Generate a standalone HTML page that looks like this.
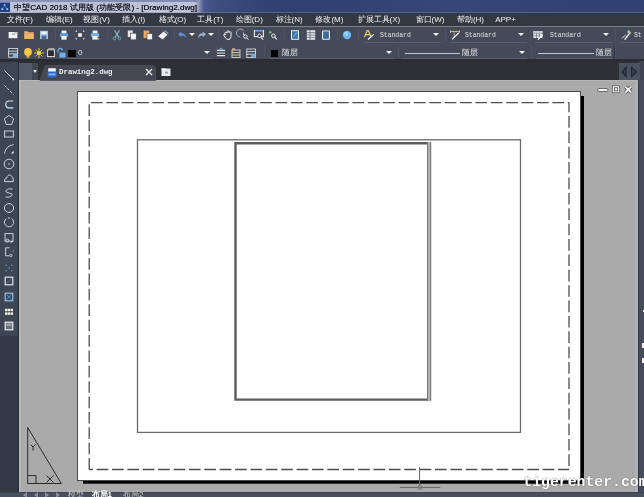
<!DOCTYPE html>
<html><head><meta charset="utf-8">
<style>
*{margin:0;padding:0;box-sizing:border-box}
html,body{width:644px;height:497px;overflow:hidden;background:#2f343b;font-family:"Liberation Sans",sans-serif}
.a{position:absolute}
svg{position:absolute;overflow:visible}
#root{position:absolute;left:0;top:0;width:644px;height:497px;overflow:hidden;filter:blur(0.3px)}
#title{left:0;top:0;width:644px;height:13px;background:linear-gradient(90deg,#bcc0d4 0,#bec2d6 194px,#9aa0c4 198px,#4a5690 204px,#3e5080 215px,#334474 260px,#304070 300px,#364676 450px,#334474 540px,#314272 644px)}
#ttop{left:0;top:0;width:198px;height:1.5px;background:linear-gradient(90deg,#8a92b8,#7e88b0)}
#tband{left:0;top:11.5px;width:644px;height:1.5px;background:linear-gradient(180deg,rgba(150,158,190,.45),rgba(120,128,160,.3))}
#ttxt{left:14px;top:1.6px;height:12px;line-height:12px;font-size:8.1px;color:#1a1c2a;text-shadow:0 0 0.4px #1a1c2a;white-space:nowrap}
#menu{left:0;top:13px;width:644px;height:13px;background:#333942}
.mi{position:absolute;top:13.4px;height:13px;line-height:13px;font-size:8px;color:#f0f0f0;white-space:nowrap}
#sep1{left:0;top:26px;width:644px;height:1.4px;background:#7a8089}
#tb{left:0;top:27px;width:644px;height:32px;background:#444a58}
#tbb{left:0;top:59.3px;width:644px;height:2.7px;background:#2a2d33}
#tabrow{left:19px;top:62px;width:625px;height:18px;background:#2e3036}
#pal{left:0;top:62px;width:18px;height:274px;background:#3e4553}
#lft{left:0;top:336px;width:19px;height:156px;background:#343a45}
#palr{left:18px;top:62px;width:1px;height:430px;background:#2a2e34}
#gray{left:19px;top:80px;width:619.2px;height:412px;background:#aaaaaa;border-left:2px solid #b6b6b6;border-right:3px solid #b0b2b8;border-top:1.5px solid #b6b6b6}
#rstrip{left:638.2px;top:62px;width:5.8px;height:430px;background:#464c5a;border-left:1.8px solid #343846}
#bot{left:0;top:492px;width:644px;height:5px;background:#47505e;border-top:1.2px solid #3e4450}
.std{position:absolute;font-family:"Liberation Mono",monospace;font-size:8px;color:#e4e4e4;height:10px;line-height:10px;white-space:nowrap;transform-origin:0 50%}
.sep{position:absolute;width:1.4px;background:#30343e;border-right:0.8px solid #4e5462}
.tri{position:absolute;width:0;height:0;border-left:3px solid transparent;border-right:3px solid transparent;border-top:3.3px solid #f0f0f0}
.cl{position:absolute;height:1px;background:#585e6c}
.c{display:inline-block;text-align:center;overflow:hidden;vertical-align:top}
.zh{position:absolute;font-size:8px;color:#e8e8e8;height:10px;line-height:10px;white-space:nowrap}
</style></head><body><div id="root">
<div id="title" class="a"></div>
<div id="ttop" class="a"></div>
<div id="tband" class="a"></div>
<div id="menu" class="a"></div>
<div id="sep1" class="a"></div>
<div id="tb" class="a"></div>
<div id="tbb" class="a"></div>
<div id="tabrow" class="a"></div>
<div id="pal" class="a"></div>
<div id="lft" class="a"></div>
<div id="palr" class="a"></div>
<div id="gray" class="a"></div>
<div id="rstrip" class="a"></div>
<div id="bot" class="a"></div>
<svg width="12" height="12" style="left:0;top:1.5px"><rect x="0" y="0.5" width="10" height="9.5" fill="#1d3f82"/><g fill="#8ec0f0"><circle cx="4.6" cy="3" r="1"/><circle cx="2.4" cy="7.2" r="1.1"/><circle cx="7.2" cy="7.2" r="1.1"/></g><path d="M4.6 3L2.4 7.2M4.6 3L7.2 7.2" stroke="#6aa0d8" stroke-width="0.6"/></svg>
<div id="ttxt" class="a"><span class="c" style="width:8.1px">中</span><span class="c" style="width:8.1px">望</span>CAD 2018 <span class="c" style="width:8.1px">试</span><span class="c" style="width:8.1px">用</span><span class="c" style="width:8.1px">版</span> (<span class="c" style="width:8.1px">功</span><span class="c" style="width:8.1px">能</span><span class="c" style="width:8.1px">受</span><span class="c" style="width:8.1px">限</span>) - [Drawing2.dwg]</div>
<div class="mi" style="left:6.7px"><span class="c" style="width:8px">文</span><span class="c" style="width:8px">件</span>(F)</div>
<div class="mi" style="left:46px"><span class="c" style="width:8px">编</span><span class="c" style="width:8px">辑</span>(E)</div>
<div class="mi" style="left:83.2px"><span class="c" style="width:8px">视</span><span class="c" style="width:8px">图</span>(V)</div>
<div class="mi" style="left:121.7px"><span class="c" style="width:8px">插</span><span class="c" style="width:8px">入</span>(I)</div>
<div class="mi" style="left:158.7px"><span class="c" style="width:8px">格</span><span class="c" style="width:8px">式</span>(O)</div>
<div class="mi" style="left:197.2px"><span class="c" style="width:8px">工</span><span class="c" style="width:8px">具</span>(T)</div>
<div class="mi" style="left:235.7px"><span class="c" style="width:8px">绘</span><span class="c" style="width:8px">图</span>(D)</div>
<div class="mi" style="left:275.5px"><span class="c" style="width:8px">标</span><span class="c" style="width:8px">注</span>(N)</div>
<div class="mi" style="left:315.4px"><span class="c" style="width:8px">修</span><span class="c" style="width:8px">改</span>(M)</div>
<div class="mi" style="left:357.6px"><span class="c" style="width:8px">扩</span><span class="c" style="width:8px">展</span><span class="c" style="width:8px">工</span><span class="c" style="width:8px">具</span>(X)</div>
<div class="mi" style="left:415.5px"><span class="c" style="width:8px">窗</span><span class="c" style="width:8px">口</span>(W)</div>
<div class="mi" style="left:456.9px"><span class="c" style="width:8px">帮</span><span class="c" style="width:8px">助</span>(H)</div>
<div class="mi" style="left:495.2px">APP+</div>
<div class="a" style="left:2.5px;top:28px;width:1px;height:31px;background:#454b56"></div>
<div class="a" style="left:5.5px;top:28px;width:1px;height:31px;background:#454b56"></div>
<div class="cl" style="left:364px;top:41.6px;width:77px"></div>
<div class="cl" style="left:450px;top:41.6px;width:77px"></div>
<div class="cl" style="left:535px;top:41.6px;width:77px"></div>
<div class="cl" style="left:620px;top:41.6px;width:24px"></div>
<div class="cl" style="left:66px;top:58.2px;width:147px"></div>
<div class="cl" style="left:270px;top:58.2px;width:124px"></div>
<div class="cl" style="left:402px;top:58.2px;width:125px"></div>
<div class="cl" style="left:536px;top:58.2px;width:76px"></div>
<div class="sep" style="left:54.5px;top:29px;height:12px"></div>
<div class="sep" style="left:107.0px;top:29px;height:12px"></div>
<div class="sep" style="left:174.0px;top:29px;height:12px"></div>
<div class="sep" style="left:217.5px;top:29px;height:12px"></div>
<div class="sep" style="left:284.0px;top:29px;height:12px"></div>
<div class="sep" style="left:337.0px;top:29px;height:12px"></div>
<div class="sep" style="left:357.5px;top:29px;height:12px"></div>
<div class="sep" style="left:445.0px;top:29px;height:12px"></div>
<div class="sep" style="left:530.0px;top:29px;height:12px"></div>
<div class="sep" style="left:614.5px;top:29px;height:12px"></div>
<div class="sep" style="left:215.5px;top:46px;height:12px"></div>
<div class="sep" style="left:263.5px;top:46px;height:12px"></div>
<div class="sep" style="left:397.5px;top:46px;height:12px"></div>
<div class="sep" style="left:531.0px;top:46px;height:12px"></div>
<div class="sep" style="left:614.3px;top:46px;height:12px"></div>
<div class="tri" style="left:188.6px;top:33.3px"></div>
<div class="tri" style="left:208.4px;top:33.3px"></div>
<div class="tri" style="left:432.5px;top:33.3px"></div>
<div class="tri" style="left:518px;top:33.3px"></div>
<div class="tri" style="left:603px;top:33.3px"></div>
<div class="tri" style="left:204px;top:51.3px"></div>
<div class="tri" style="left:386px;top:51.3px"></div>
<div class="tri" style="left:519px;top:51.3px"></div>
<svg width="12" height="12" viewBox="0 0 12 12" style="left:7.3px;top:28.8px"><rect x="1.6" y="3" width="8.8" height="6.2" fill="#f2f2f2"/><rect x="5" y="4.6" width="3" height="1.2" fill="#9aa"/><rect x="7.5" y="3" width="2.9" height="2" fill="#c8c8c8"/></svg>
<svg width="12" height="12" viewBox="0 0 12 12" style="left:22.6px;top:28.8px"><path d="M1.2 2.3h3.4l1 1H10.9v6.6H1.2z" fill="#f0b36a"/><rect x="1.2" y="4.2" width="9.7" height="0.8" fill="#d89a50"/></svg>
<svg width="12" height="12" viewBox="0 0 12 12" style="left:38.1px;top:28.8px"><rect x="2" y="1.8" width="8" height="8.3" fill="#9fc4e6"/><rect x="3.3" y="2.6" width="5.4" height="2.6" fill="#e8f2fb"/><rect x="3.6" y="6.6" width="4.8" height="3.5" fill="#4a6a90"/></svg>
<svg width="12" height="12" viewBox="0 0 12 12" style="left:58.2px;top:28.8px"><rect x="3.6" y="1.6" width="4.8" height="3" fill="#f4f4f4"/><rect x="1.8" y="4" width="8.4" height="4.2" rx="1.6" fill="#5e9ede"/><rect x="3.4" y="7" width="5.2" height="3.6" fill="#fafafa"/></svg>
<svg width="12" height="12" viewBox="0 0 12 12" style="left:74.2px;top:28.8px"><path d="M2 3v-1h1M9 2h1v1M10 9v1h-1M3 10h-1v-1" stroke="#dcdcdc" stroke-width="1" fill="none"/><rect x="4.2" y="4.2" width="3.6" height="3.6" fill="#f4f4f4"/></svg>
<svg width="12" height="12" viewBox="0 0 12 12" style="left:89.4px;top:28.8px"><rect x="3.6" y="1.6" width="4.8" height="3" fill="#f4f4f4"/><rect x="1.8" y="4" width="8.4" height="4.2" rx="1.6" fill="#7ab0e4"/><rect x="3.4" y="7" width="5.2" height="3.6" fill="#fafafa"/><rect x="8.4" y="9.2" width="1.8" height="1.4" fill="#bbb"/></svg>
<svg width="12" height="12" viewBox="0 0 12 12" style="left:110.8px;top:28.8px"><path d="M3.5 1.2L8 8.5M8.5 1.2L4 8.5" stroke="#8cc0d0" stroke-width="1.1" fill="none"/><circle cx="3.5" cy="9.4" r="1.4" fill="none" stroke="#6aa8b8" stroke-width="0.9"/><circle cx="8.5" cy="9.4" r="1.4" fill="none" stroke="#6aa8b8" stroke-width="0.9"/></svg>
<svg width="12" height="12" viewBox="0 0 12 12" style="left:126.2px;top:28.8px"><rect x="1.8" y="1.5" width="5" height="6.5" fill="#e8e8e8"/><rect x="4.6" y="4.2" width="5.6" height="6.6" fill="#fafafa" stroke="#3a3f48" stroke-width="0.6"/></svg>
<svg width="12" height="12" viewBox="0 0 12 12" style="left:141.6px;top:28.8px"><rect x="1.6" y="1.6" width="5.6" height="7.5" fill="#f0a860"/><rect x="5" y="4.6" width="5.4" height="6.2" fill="#f6f6f6" stroke="#3a3f48" stroke-width="0.6"/></svg>
<svg width="12" height="12" viewBox="0 0 12 12" style="left:157.2px;top:28.8px"><path d="M1.2 7.2L6.5 2.6L10.4 5.8L5.6 10.6z" fill="#f4f4f4"/><path d="M7.6 1.5l3.6 3.2" stroke="#7aa0c8" stroke-width="1.4"/></svg>
<svg width="12" height="12" viewBox="0 0 12 12" style="left:176.3px;top:28.8px"><path d="M2 5.2L5.2 2.4V4.2C8.2 4.2 10 5.8 10 9.6C9 7.4 7.6 6.6 5.2 6.6V8.2z" fill="#5b8fd8"/></svg>
<svg width="12" height="12" viewBox="0 0 12 12" style="left:195.6px;top:28.8px"><path d="M10 5.2L6.8 2.4V4.2C3.8 4.2 2 5.8 2 9.6C3 7.4 4.4 6.6 6.8 6.6V8.2z" fill="#9ab0cc"/></svg>
<svg width="12" height="12" viewBox="0 0 12 12" style="left:221.8px;top:28.8px"><path d="M3 6.2V4.2q0-1 1-1t1 1V2.8q0-1 1-1t1 1v.8q0-.9 1-.9t1 1V7.6q0 3-3 3H6.2q-1.6 0-2.6-1.6L1.8 6.4q-.4-.9.4-1.2t1 .8z" fill="none" stroke="#f0f0f0" stroke-width="1"/></svg>
<svg width="12" height="12" viewBox="0 0 12 12" style="left:237.6px;top:28.8px"><path d="M5.6 1.6A4 4 0 1 0 2.2 8" fill="none" stroke="#a8b8c8" stroke-width="0.9"/><path d="M5.5 3.5V6H7" stroke="#d0d8e0" stroke-width="0.8" fill="none"/><circle cx="7.4" cy="7.6" r="1.7" fill="none" stroke="#f0f0f0" stroke-width="0.9"/><path d="M8.6 8.8l1.8 1.8" stroke="#f0f0f0" stroke-width="1"/></svg>
<svg width="12" height="12" viewBox="0 0 12 12" style="left:252.9px;top:28.8px"><rect x="1.4" y="1.6" width="9" height="6" fill="none" stroke="#f0f0f0" stroke-width="1.1"/><rect x="2" y="1.1" width="8" height="1.3" fill="#5aa0e0"/><circle cx="6.5" cy="6.8" r="1.8" fill="#3a3f48" stroke="#f0f0f0" stroke-width="0.9"/><path d="M7.8 8.2l2.4 2.4" stroke="#f0f0f0" stroke-width="1.1"/></svg>
<svg width="12" height="12" viewBox="0 0 12 12" style="left:267.4px;top:28.8px"><circle cx="3.4" cy="3.2" r="1.2" fill="#7ac060"/><circle cx="6.4" cy="6.8" r="1.8" fill="none" stroke="#f0f0f0" stroke-width="1"/><path d="M7.7 8.2l2.2 2.2" stroke="#f0f0f0" stroke-width="1.1"/></svg>
<svg width="12" height="12" viewBox="0 0 12 12" style="left:288.8px;top:28.8px"><rect x="2" y="1.2" width="8" height="9.6" fill="#e8eef4"/><rect x="3" y="2.2" width="6" height="7.6" fill="#3f78a8"/><path d="M4 8L8 3.6" stroke="#a8d0f0" stroke-width="0.8"/></svg>
<svg width="12" height="12" viewBox="0 0 12 12" style="left:304.7px;top:28.8px"><rect x="1.8" y="1.2" width="8.4" height="9.6" fill="#e0e4e8"/><path d="M1.8 3.6h8.4M1.8 6h8.4M1.8 8.4h8.4M5 1.2v9.6" stroke="#5a6470" stroke-width="0.7"/></svg>
<svg width="12" height="12" viewBox="0 0 12 12" style="left:319.6px;top:28.8px"><rect x="2" y="1.4" width="8" height="9.4" rx="1" fill="#e8eef4"/><rect x="3.1" y="2.4" width="5.8" height="7.4" fill="#3a6a98"/></svg>
<svg width="12" height="12" viewBox="0 0 12 12" style="left:341.1px;top:28.8px"><circle cx="6" cy="6" r="4.2" fill="#6cb8ec"/><circle cx="5" cy="4.8" r="2" fill="#9ad2f6"/></svg>
<svg width="12" height="12" viewBox="0 0 12 12" style="left:363.2px;top:28.8px"><path d="M1.4 8.2L4.2 1.6h1.2L7.8 7.4M2.6 5.6h4" stroke="#e8d070" stroke-width="1.2" fill="none"/><path d="M5 10.6L10.8 5.2" stroke="#f0f0f0" stroke-width="1.3"/></svg>
<svg width="12" height="12" viewBox="0 0 12 12" style="left:449.3px;top:28.8px"><path d="M1.2 2.6h9.6M1.6 1.4v2.6M10.4 1.4v2.6" stroke="#e8c870" stroke-width="0.9" fill="none"/><path d="M3 10.4L9.6 4" stroke="#f0f0f0" stroke-width="1.3"/><path d="M5.2 3.4v4" stroke="#c8d8a0" stroke-width="0.8"/></svg>
<svg width="12" height="12" viewBox="0 0 12 12" style="left:532.2px;top:28.8px"><rect x="1.4" y="2" width="9" height="7" fill="#f0f0f0"/><path d="M1.4 4.4h9M1.4 6.8h9M4.4 2v7M7.4 2v7" stroke="#606a78" stroke-width="0.7"/><rect x="1.4" y="2" width="9" height="2.3" fill="#c0c8d0"/><path d="M6 10.6L10.6 6" stroke="#f8f8f8" stroke-width="1.2"/></svg>
<svg width="12" height="12" viewBox="0 0 12 12" style="left:619.8px;top:28.8px"><path d="M2 9.4L5.6 5.8" stroke="#e0e0e0" stroke-width="1"/><path d="M4.6 10.6L10.4 3.2" stroke="#f4f4f4" stroke-width="1.4"/><circle cx="8.8" cy="2.8" r="1.5" fill="#a0c880"/></svg>
<svg width="12" height="12" viewBox="0 0 12 12" style="left:7.3px;top:46.8px"><rect x="1.6" y="1.6" width="9" height="8.6" fill="none" stroke="#d8dce0" stroke-width="0.9"/><path d="M1.6 4.2h9M1.6 6.8h9" stroke="#d8dce0" stroke-width="0.9"/><rect x="6" y="6.8" width="4.6" height="3.4" fill="#80b4e0"/></svg>
<svg width="12" height="12" viewBox="0 0 12 12" style="left:22.2px;top:46.8px"><circle cx="6" cy="5" r="3.9" fill="#f2c84a"/><rect x="4.6" y="8.6" width="2.8" height="2.2" fill="#e0b040"/></svg>
<svg width="12" height="12" viewBox="0 0 12 12" style="left:33.2px;top:46.8px"><circle cx="6" cy="6" r="2.4" fill="#f0d040"/><g stroke="#e8c838" stroke-width="1"><path d="M6 1v2M6 9v2M1 6h2M9 6h2M2.6 2.6l1.3 1.3M8.1 8.1l1.3 1.3M2.6 9.4l1.3-1.3M8.1 3.9l1.3-1.3"/></g></svg>
<svg width="12" height="12" viewBox="0 0 12 12" style="left:45.0px;top:46.8px"><rect x="2.6" y="2.8" width="6.8" height="6.8" fill="#2a2a2a" stroke="#e4e4e4" stroke-width="1"/><path d="M2.6 2.8l1.4-1.2h5.4" stroke="#c8c8c8" stroke-width="0.8" fill="none"/></svg>
<svg width="12" height="12" viewBox="0 0 12 12" style="left:55.2px;top:46.8px"><path d="M3 5.6V3.6a2.2 2.2 0 0 1 4.4 0" fill="none" stroke="#70b0e8" stroke-width="1.2"/><rect x="4.4" y="5.6" width="6.2" height="5" fill="#70b0e8"/></svg>
<svg width="12" height="12" viewBox="0 0 12 12" style="left:214.9px;top:46.8px"><path d="M2 3.4h8M2 6h8M2 8.6h8" stroke="#e0e4e8" stroke-width="1.1"/><path d="M6 0.6L4 2.6h4z" fill="#70b0e8"/></svg>
<svg width="12" height="12" viewBox="0 0 12 12" style="left:230.1px;top:46.8px"><rect x="2" y="3" width="8" height="7.4" fill="none" stroke="#e0d8c0" stroke-width="0.9"/><path d="M2 5.6h8M2 8h8" stroke="#e0d8c0" stroke-width="0.9"/><rect x="2" y="1.4" width="3" height="1.6" fill="#e8c060"/></svg>
<svg width="12" height="12" viewBox="0 0 12 12" style="left:245.4px;top:46.8px"><rect x="1.8" y="2" width="8.6" height="8.4" fill="none" stroke="#d8dce0" stroke-width="0.9"/><path d="M1.8 4.6h8.6M1.8 7.2h8.6" stroke="#d8dce0" stroke-width="0.9"/><rect x="6.2" y="7.2" width="4.2" height="3.2" fill="#78a8d8"/></svg>
<svg width="12" height="12" viewBox="0 0 12 12" style="left:2.8px;top:69.2px"><path d="M1.4 1.4L10.6 10.6" stroke="#c8d2dc" fill="none" stroke-width="1"/><circle cx="10.4" cy="10.4" r="0.9" fill="#e0e8f0"/></svg>
<svg width="12" height="12" viewBox="0 0 12 12" style="left:2.8px;top:84.0px"><path d="M1.4 1.4L10.6 10.6" stroke="#c8d2dc" fill="none" stroke-width="1" stroke-dasharray="2.6 1.4"/></svg>
<svg width="12" height="12" viewBox="0 0 12 12" style="left:2.8px;top:98.8px"><path d="M10.2 2H6.2A3.4 3.4 0 0 0 6.2 8.8H10.2" stroke="#d8e0e8" fill="none" stroke-width="1.2"/><path d="M4.4 8.8H10.4" stroke="#7cc8d8" stroke-width="1.3"/></svg>
<svg width="12" height="12" viewBox="0 0 12 12" style="left:2.8px;top:113.6px"><path d="M6 1.4L10.6 4.8L8.8 10.4H3.2L1.4 4.8z" stroke="#c8d2dc" fill="none" stroke-width="1"/></svg>
<svg width="12" height="12" viewBox="0 0 12 12" style="left:2.8px;top:128.4px"><rect x="1.6" y="3" width="8.8" height="6" stroke="#c8d2dc" fill="none" stroke-width="1"/></svg>
<svg width="12" height="12" viewBox="0 0 12 12" style="left:2.8px;top:143.3px"><path d="M1.6 10.4Q2.6 3 10.6 1.6" stroke="#c8d2dc" fill="none" stroke-width="1" stroke-width="1.2"/><path d="M8 10.4l2.6-2.6v2.6z" fill="#f0f0f0"/></svg>
<svg width="12" height="12" viewBox="0 0 12 12" style="left:2.8px;top:157.6px"><circle cx="6" cy="6" r="4.8" stroke="#c8d2dc" fill="none" stroke-width="1"/><circle cx="6" cy="6" r="0.8" fill="#c8d2dc"/></svg>
<svg width="12" height="12" viewBox="0 0 12 12" style="left:2.8px;top:172.4px"><path d="M1.6 9.6Q0.8 6.4 3.6 6.2Q4.4 2.2 7.6 3.2Q10.8 4.4 10.4 9.6z" stroke="#c8d2dc" fill="none" stroke-width="1"/></svg>
<svg width="12" height="12" viewBox="0 0 12 12" style="left:2.8px;top:187.4px"><path d="M9.4 2.2Q6 0.8 3.6 3T6 6T8.4 9T2.6 9.8" stroke="#c8d2dc" fill="none" stroke-width="1" stroke-width="1.1"/></svg>
<svg width="12" height="12" viewBox="0 0 12 12" style="left:2.8px;top:202.4px"><ellipse cx="6" cy="6" rx="4.6" ry="4.4" stroke="#c8d2dc" fill="none" stroke-width="1" stroke-width="1.1"/></svg>
<svg width="12" height="12" viewBox="0 0 12 12" style="left:2.8px;top:215.6px"><path d="M3.2 2.6A4.6 4.6 0 1 0 8.6 2.4" stroke="#c8d2dc" fill="none" stroke-width="1" stroke-width="1.1"/><circle cx="6" cy="2" r="0.8" fill="#e0e8f0"/></svg>
<svg width="12" height="12" viewBox="0 0 12 12" style="left:2.8px;top:232.0px"><rect x="2" y="1.6" width="8" height="7.6" stroke="#c8d2dc" fill="none" stroke-width="1"/><circle cx="4.4" cy="8.6" r="1.5" stroke="#c8d2dc" fill="none" stroke-width="1"/><path d="M7.6 10.6l2.4-1.4" stroke="#f0f0f0"/></svg>
<svg width="12" height="12" viewBox="0 0 12 12" style="left:2.8px;top:246.4px"><path d="M6.6 1.8H2.6V9.8H6" stroke="#c8d2dc" fill="none" stroke-width="1"/><circle cx="7.8" cy="9.4" r="1.2" stroke="#c8d2dc" fill="none" stroke-width="1"/><circle cx="10.2" cy="5" r="0.6" fill="#c8d2dc"/></svg>
<svg width="12" height="12" viewBox="0 0 12 12" style="left:2.8px;top:262.0px"><g fill="#6f98c0"><circle cx="3.2" cy="3.2" r="0.8"/><circle cx="8.8" cy="3.2" r="0.8"/><circle cx="6" cy="6" r="0.8"/><circle cx="3.2" cy="8.8" r="0.8"/><circle cx="8.8" cy="8.8" r="0.8"/></g></svg>
<svg width="12" height="12" viewBox="0 0 12 12" style="left:2.8px;top:275.2px"><rect x="2.2" y="2.2" width="7.6" height="7.6" stroke="#e4e8ee" fill="#3e4553" stroke-width="1.2"/><path d="M3.6 8.4L8.4 3.6" stroke="#7c8898" stroke-width="0.7"/></svg>
<svg width="12" height="12" viewBox="0 0 12 12" style="left:2.8px;top:290.8px"><rect x="2.2" y="2.2" width="7.6" height="7.6" stroke="#9cc0e0" fill="#2c4a6a" stroke-width="1.2"/><path d="M3.6 3.6L8.4 8.4M8.4 3.6L3.6 8.4" stroke="#6a9ac8" stroke-width="0.8"/></svg>
<svg width="12" height="12" viewBox="0 0 12 12" style="left:2.8px;top:305.8px"><g fill="#f2f2f2"><rect x="2" y="2.8" width="2.4" height="2.4"/><rect x="4.8" y="2.8" width="2.4" height="2.4"/><rect x="7.6" y="2.8" width="2.4" height="2.4"/><rect x="2" y="6.4" width="2.4" height="2.4"/><rect x="4.8" y="6.4" width="2.4" height="2.4"/><rect x="7.6" y="6.4" width="2.4" height="2.4"/></g></svg>
<svg width="12" height="12" viewBox="0 0 12 12" style="left:2.8px;top:320.0px"><rect x="2.2" y="2.2" width="7.6" height="7.6" stroke="#e8ecf0" fill="#6a7078" stroke-width="1.2"/><rect x="3.4" y="3.4" width="5.2" height="2.6" fill="#9aa0a8"/></svg>
<div class="std" style="left:379.6px;top:30.2px;transform:scaleX(0.8)">Standard</div>
<div class="std" style="left:464.5px;top:30.2px;transform:scaleX(0.8)">Standard</div>
<div class="std" style="left:549.5px;top:30.2px;transform:scaleX(0.8)">Standard</div>
<div class="std" style="left:634.4px;top:30.2px;transform:scaleX(0.8)">St</div>
<div class="a" style="left:68.4px;top:50px;width:7.7px;height:7px;background:#000"></div>
<div class="std" style="left:78px;top:48px;font-family:'Liberation Sans',sans-serif;font-size:8px">0</div>
<div class="a" style="left:270.6px;top:49.8px;width:7.6px;height:7px;background:#000"></div>
<div class="zh" style="left:281.5px;top:48px"><span class="c" style="width:8px">随</span><span class="c" style="width:8px">层</span></div>
<div class="a" style="left:404.7px;top:52.8px;width:55.5px;height:1.4px;background:#c4c8d0"></div>
<div class="zh" style="left:461.5px;top:48px"><span class="c" style="width:8px">随</span><span class="c" style="width:8px">层</span></div>
<div class="a" style="left:538px;top:52.8px;width:56px;height:1.4px;background:#c4c8d0"></div>
<div class="zh" style="left:595.5px;top:48px"><span class="c" style="width:8px">随</span><span class="c" style="width:8px">层</span></div>
<div class="a" style="left:19.4px;top:63.2px;width:12.8px;height:16.8px;background:#525a66"></div>
<div class="a" style="left:32.2px;top:63.2px;width:6.3px;height:16.8px;background:#404852"></div>
<div class="a" style="left:32.6px;top:69.6px;width:0;height:0;border-left:2.6px solid transparent;border-right:2.6px solid transparent;border-top:3.6px solid #f4f4f4"></div>
<svg width="120" height="16" style="left:40px;top:64.5px"><path d="M0 15.5L5 1.5Q5.6 0.5 7 0.5H112Q115.5 0.5 115.5 4V15.5z" fill="#454852" stroke="#4e515b" stroke-width="0.8"/></svg>
<svg width="12" height="12" viewBox="0 0 12 12" style="left:46.3px;top:66.6px"><rect x="2.2" y="1.2" width="7.6" height="4" rx="0.6" fill="#f4f6fa"/><rect x="1.5" y="4.6" width="9.2" height="6" rx="1" fill="#2a68c8"/><rect x="2.6" y="6.4" width="7" height="2" fill="#7fb0ee"/></svg>
<div class="std" style="left:58.5px;top:66.6px;font-size:8px;font-weight:bold;color:#f0f0f0;transform:scaleX(0.93)">Drawing2.dwg</div>
<svg width="12" height="12" viewBox="0 0 12 12" style="left:142.8px;top:65.8px"><path d="M3 3L9 9M9 3L3 9" stroke="#f4f4f4" stroke-width="1.4"/></svg>
<svg width="12" height="12" viewBox="0 0 12 12" style="left:160px;top:66px"><rect x="1.5" y="2.5" width="9" height="7.5" fill="#e8eaee"/><rect x="1.5" y="2.5" width="4" height="1.4" fill="#fff"/><rect x="5" y="5.6" width="3" height="2" fill="#9aa"/></svg>
<div class="a" style="left:619.3px;top:63.2px;width:20.4px;height:16.5px;background:#4a525e"></div>
<div class="a" style="left:639.7px;top:61px;width:4.3px;height:19px;background:#3e4550"></div>
<svg width="24" height="19" style="left:619px;top:61px"><path d="M7 6.4L3.2 10.9L7 15.3z" fill="#3a4250" stroke="#1e2530" stroke-width="1.2"/><path d="M12.6 6.4L17.6 10.9L12.6 15.3z" fill="#3a4250" stroke="#1e2530" stroke-width="1.2"/></svg>
<svg width="644" height="497" style="left:0;top:0">
  <rect x="83" y="480" width="501" height="3.7" fill="#000"/>
  <rect x="580" y="96" width="4" height="387.7" fill="#000"/>
  <rect x="77.5" y="91.5" width="503" height="389" fill="#fff" stroke="#4a4a4a" stroke-width="1"/>
  <g fill="none" stroke="#4e4e4e" stroke-width="1.3" stroke-dasharray="11.65 3.73">
    <path d="M89.2 102.6H569" stroke-dashoffset="13.6"/>
    <path d="M569 102.6V469.5" stroke-dashoffset="2"/>
    <path d="M569 469.5H89.2" stroke-dashoffset="0.7"/>
    <path d="M89.2 469.5V102.6" stroke-dashoffset="0.2"/>
  </g>
  <rect x="137.5" y="139.8" width="383" height="292.6" fill="none" stroke="#6a6a6a" stroke-width="1.3"/>
  <path d="M429 143.2H235.5V399.6H429" fill="none" stroke="#5c5c5c" stroke-width="2.4"/>
  <rect x="427" y="142" width="4.3" height="258.8" fill="#bdbdbd"/>
  <path d="M427.6 142V400.8M430.5 142V400.8" stroke="#7a7a7a" stroke-width="1.2"/>
  <!-- crosshair -->
  <path d="M419.6 467V485.8M399.8 487.4H440.3" stroke="#666" stroke-width="1"/>
  <circle cx="420" cy="487.4" r="2" fill="none" stroke="#777" stroke-width="1"/>
  <!-- UCS triangle -->
  <g fill="none" stroke="#2a2a2a" stroke-width="1">
    <path d="M27.7 427.5V483.5H61.3z"/>
    <path d="M27.7 475.6H36V483.5"/>
    <path d="M30.6 444.6L33 447L35.6 444.4M33 447V450.6"/>
    <path d="M46.5 475.5L53.5 482.5M53.5 475.5L46.5 482.5"/>
  </g>
  <!-- min restore close -->
  <path d="M599 90H606.5" stroke="#555" stroke-width="3.6" stroke-linecap="round"/>
  <path d="M599 90H606.5" stroke="#f4f4f4" stroke-width="2.2" stroke-linecap="round"/>
  <rect x="612.4" y="85.8" width="7" height="7" fill="#f0f0f0" stroke="#555" stroke-width="0.7"/>
  <rect x="614.4" y="87.8" width="3.2" height="3.2" fill="none" stroke="#555" stroke-width="0.8"/>
  <path d="M625.3 86.6L631.2 92.5M631.2 86.6L625.3 92.5" stroke="#444" stroke-width="3.2"/>
  <path d="M625.3 86.6L631.2 92.5M631.2 86.6L625.3 92.5" stroke="#f4f4f4" stroke-width="1.8"/>
</svg>
<div class="a" style="left:642.6px;top:309.6px;width:1.4px;height:2.2px;background:#e8e8e8"></div>
<div class="a" style="left:642.4px;top:342.6px;width:1.6px;height:5px;background:#f0f0f0"></div>
<div class="a" style="left:642.4px;top:358px;width:1.6px;height:5px;background:#f0f0f0"></div>
<svg width="70" height="8" style="left:14px;top:490px"><g fill="#8290a2"><path d="M7 2v6M13 2L9 5L13 8z"/><path d="M24 2L20 5L24 8z"/><path d="M31 2L35 5L31 8z"/><path d="M42 2L46 5L42 8zM47 2v6"/></g></svg>
<div class="zh" style="left:68px;top:490px;color:#c8c8c8"><span class="c" style="width:8px">模</span><span class="c" style="width:8px">型</span></div>
<div class="zh" style="left:91.6px;top:490px;color:#ffffff;font-weight:bold"><span class="c" style="width:8px">布</span><span class="c" style="width:8px">局</span>1</div>
<div class="zh" style="left:123px;top:490px;color:#c8c8c8"><span class="c" style="width:8px">布</span><span class="c" style="width:8px">局</span>2</div>
<div class="a" style="left:523.3px;top:472.8px;font-family:'Liberation Mono',monospace;font-size:14.8px;line-height:18px;color:#fff;font-weight:bold;white-space:nowrap;text-shadow:0 0 1px #333">tigerenter.com</div>
</div></body></html>
